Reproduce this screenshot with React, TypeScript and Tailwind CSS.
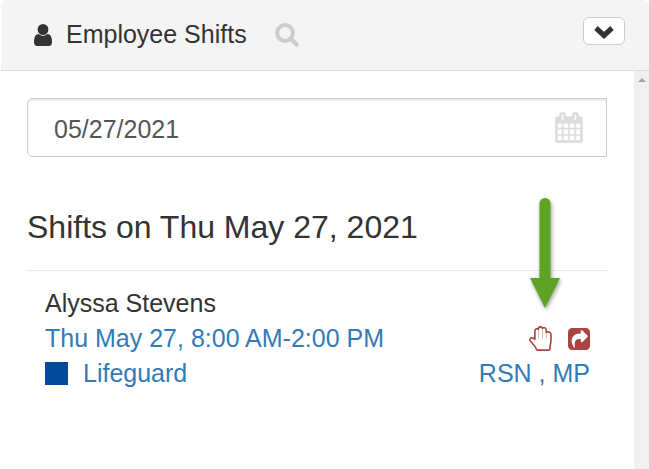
import { useState } from 'react';

interface IconProps {
    className?: string;
}

function UserIcon({ className }: IconProps) {
    return (
        <svg viewBox="0 128 1280 1536" preserveAspectRatio="none" fill="currentColor" className={className} aria-hidden="true">
            <path d="M1280 1399q0 109-62.5 187t-150.5 78H213q-88 0-150.5-78T0 1399q0-85 8.5-160.5t31.5-152 58.5-131 94-89T327 832q131 128 313 128t313-128q76 0 134.5 34.5t94 89 58.5 131 31.5 152 8.5 160.5zm-256-887q0 159-112.5 271.5T640 896 368.5 783.5 256 512t112.5-271.5T640 128t271.5 112.5T1024 512z" />
        </svg>
    );
}

function SearchIcon({ className }: IconProps) {
    return (
        <svg viewBox="0 0 24 24" fill="none" stroke="currentColor" className={className} aria-hidden="true">
            <circle cx="10" cy="10" r="7.900" strokeWidth="4" />
            <path d="M15.500 15.500l6 6" strokeWidth="4.400" strokeLinecap="round" />
        </svg>
    );
}

function CalendarIcon({ className }: IconProps) {
    return (
        <svg viewBox="-20 -20 1704 1832" preserveAspectRatio="none" fill="currentColor" stroke="currentColor" strokeWidth="40" className={className} aria-hidden="true">
            <path d="M128 1664h288v-288H128v288zm352 0h320v-288H480v288zm-352-352h288V992H128v320zm352 0h320V992H480v320zM128 928h288V640H128v288zm736 736h320v-288H864v288zM480 928h320V640H480v288zm768 736h288v-288h-288v288zm-384-352h320V992H864v320zM512 448V160q0-13-9.5-22.5T480 128h-64q-13 0-22.5 9.5T384 160v288q0 13 9.5 22.5T416 480h64q13 0 22.5-9.5T512 448zm736 864h288V992h-288v320zM864 928h320V640H864v288zm384 0h288V640h-288v288zm32-480V160q0-13-9.5-22.5T1248 128h-64q-13 0-22.5 9.5T1152 160v288q0 13 9.5 22.5t22.5 9.5h64q13 0 22.5-9.5t9.5-22.5zm384-64v1280q0 52-38 90t-90 38H128q-52 0-90-38t-38-90V384q0-52 38-90t90-38h128v-96q0-66 47-113T416 0h64q66 0 113 47t47 113v96h384v-96q0-66 47-113t113-47h64q66 0 113 47t47 113v96h128q52 0 90 38t38 90z" />
        </svg>
    );
}

function ChevronIcon({ className }: IconProps) {
    return (
        <svg viewBox="0 0 20 13" fill="none" stroke="currentColor" strokeWidth="5.2" className={className} aria-hidden="true">
            <path d="M2 2l8 7.4L18 2" />
        </svg>
    );
}

function HandIcon({ className }: IconProps) {
    return (
        <svg viewBox="0 0 23 25" fill="none" stroke="currentColor" strokeLinejoin="round" strokeLinecap="round" className={className} aria-hidden="true">
            <path
                strokeWidth="1.6"
                d="M5.900 13.400V5.100C5.900 2.500 8.900 2.200 9.400 3.600V3C9.400.300 13 .200 13.400 2.300C14.400 1.200 17.300 1.600 17.300 4.200V6.400C18.600 5.400 22 5.800 22 8.600V13.600C22 17 21 18.800 21 21.200V22.400C21 23.600 20.300 24.100 19.300 24.100H8.600C7.600 24.100 7 23.500 7 22.500C7 21 5.600 20 4.600 18.700L1.500 15.200C0 13.300 1.800 11 4 12Z"
            />
            <path strokeWidth="1" strokeOpacity="0.35" d="M9.500 4v8M13.500 3v9M17.400 6v6" />
        </svg>
    );
}

function ShareSquareIcon({ className }: IconProps) {
    return (
        <svg viewBox="0 128 1536 1536" fill="currentColor" className={className} aria-hidden="true">
            <path d="M1005 1101l352-352q19-19 19-45t-19-45L1005 307q-30-31-69-14-40 17-40 59v160q-119 0-216 19.5t-162.5 51-114 79-76.5 95.5-44.5 109-21.5 111.5-5 110.5q0 181 167 404 11 12 25 12 7 0 13-3 22-9 19-33-44-354 62-473 46-52 130-75.5t224-23.5v160q0 42 40 59 12 5 24 5 26 0 45-19zM1536 416v960q0 119-84.5 203.5T1248 1664H288q-119 0-203.5-84.5T0 1376V416q0-119 84.5-203.5T288 128h960q119 0 203.5 84.5T1536 416z" />
        </svg>
    );
}

function PointerArrow({ className }: IconProps) {
    return (
        <svg viewBox="0 0 30 110" className={className} aria-hidden="true">
            <path fill="#5fa324" d="M9.500 5.500a5.500 5.500 0 0 1 11 0V80H30L15 110 0 80h9.500z" />
        </svg>
    );
}

export default function App() {
    const [date, setDate] = useState('05/27/2021');

    return (
        <div className="flex min-h-screen flex-col bg-white pl-px font-['Liberation_Sans',Arial,sans-serif] text-[25px] leading-[35px] text-[#333]">
            <header className="flex items-center rounded-t-md border-b border-[#ddd] bg-[#f4f4f4] pt-[17px] pr-6 pb-[18px] pl-[33px]">
                <UserIcon className="h-[22px] w-[18px]" />
                <h1 className="ml-3.5">Employee Shifts</h1>
                <button type="button" aria-label="Search shifts" className="ml-7 text-[#ccc]">
                    <SearchIcon className="size-6" />
                </button>
                <button
                    type="button"
                    aria-label="Toggle panel"
                    className="mt-[-8px] ml-auto flex h-7 w-[42px] items-center justify-center rounded-md border border-[#ccc] bg-white"
                >
                    <ChevronIcon className="mt-1 h-[13px] w-5" />
                </button>
            </header>

            <div className="flex flex-1">
                <main className="min-w-0 flex-1 px-[27px] pt-[27px] pl-[26px]">
                    <div className="flex h-[59px] items-center rounded-l-md border border-[#ccc] pr-[23px] shadow-[inset_0_2px_2px_rgba(0,0,0,0.075)]">
                        <input
                            type="text"
                            aria-label="Date"
                            value={date}
                            onChange={(e) => setDate(e.target.value)}
                            className="h-full min-w-0 flex-1 bg-transparent pt-1 pl-[26px] text-[#555] outline-none"
                        />
                        <button type="button" aria-label="Open calendar" className="text-[#ddd]">
                            <CalendarIcon className="h-[31px] w-7" />
                        </button>
                    </div>

                    <h2 className="mt-[51px] border-b border-[#e8e8e8] pb-6 text-[32px] leading-[38px]">
                        Shifts on Thu May 27, 2021
                    </h2>

                    <section className="relative mt-[15px] pr-[17px] pl-[18px]">
                        <PointerArrow className="pointer-events-none absolute right-[47px] bottom-[83px] h-[110px] w-[30px] drop-shadow-[1px_2px_2px_rgba(0,0,0,0.4)]" />
                        <h3>Alyssa Stevens</h3>
                        <div className="flex items-center justify-between">
                            <a href="#shift" className="text-[#337ab7]">Thu May 27, 8:00 AM-2:00 PM</a>
                            <div className="flex items-center gap-4 text-[#a94442]">
                                <button type="button" aria-label="Pick up shift">
                                    <HandIcon className="h-[25px] w-[23px]" />
                                </button>
                                <button type="button" aria-label="Share shift">
                                    <ShareSquareIcon className="size-[22px]" />
                                </button>
                            </div>
                        </div>
                        <div className="flex items-center justify-between text-[#337ab7]">
                            <div className="flex items-center gap-[15px]">
                                <span className="size-[23px] bg-[#004b98]" />
                                <a href="#position">Lifeguard</a>
                            </div>
                            <div>
                                <a href="#rsn">RSN</a> , <a href="#mp">MP</a>
                            </div>
                        </div>
                    </section>
                </main>

                {/* Scroll track */}
                <div className="flex w-[15px] justify-center bg-[#f0f0f0] pt-[7px]">
                    <svg viewBox="0 0 8 4" className="h-1 w-2" fill="#a3a3a3" aria-hidden="true">
                        <path d="M4 0l4 4H0z" />
                    </svg>
                </div>
            </div>
        </div>
    );
}
